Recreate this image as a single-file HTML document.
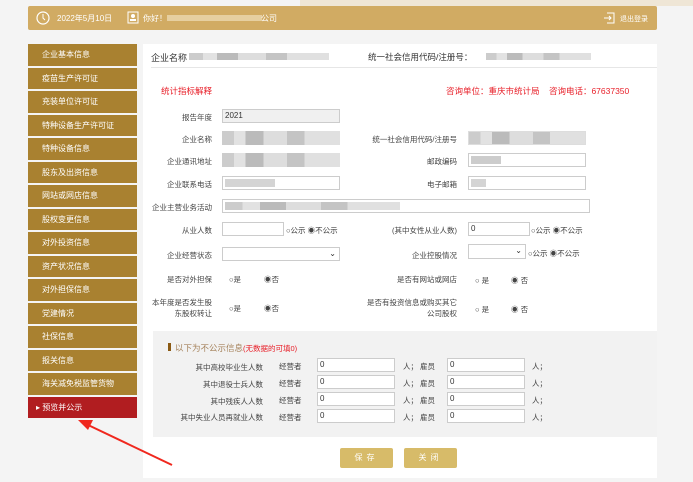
<!DOCTYPE html>
<html><head><meta charset="utf-8"><style>
*{margin:0;padding:0;box-sizing:border-box}
body{width:693px;height:482px;background:#f4f4f4;font-family:"Liberation Sans","Noto Sans CJK SC",sans-serif;font-size:8px;color:#333;position:relative;overflow:hidden}
.a{position:absolute;white-space:nowrap}
.hdr{left:28px;top:6px;width:629px;height:24px;background:#d1ab63;border-radius:2px;color:#fff;font-size:8px}
.side{left:28px;top:44px;width:109px}
.it{height:21.5px;margin-bottom:2px;background:#a98130;color:#fff;font-size:8px;line-height:21.5px;padding-left:14px}
.it.on{background:#b11d20;padding-left:8px}
.main{left:143px;top:44px;width:514px;height:434px;background:#fff}
.lbl{text-align:right;width:90px;font-size:7.5px;color:#444}
.in{height:14px;border:1px solid #ccc;background:#fff;font-size:8px;padding-left:2px;line-height:12px}
.bl{background:linear-gradient(90deg,#ccc 0 10%,#e2e2e2 10% 20%,#bbb 20% 35%,#ddd 35% 55%,#c4c4c4 55% 70%,#e0e0e0 70% 100%)}
.r{font-size:7.5px;color:#444}
.btn{width:53px;height:20px;background:#d7bb69;color:#fff;text-align:center;line-height:20px;border-radius:2px;font-size:8px;letter-spacing:4px}
</style></head><body>
<div class="a" style="left:300px;top:0;width:393px;height:6px;background:#efe6d6"></div>
<div class="a hdr">
 <svg class="a" style="left:8px;top:5px" width="14" height="14"><circle cx="7" cy="7" r="6" fill="none" stroke="#fff" stroke-width="1.2"/><path d="M7 3v4l2 2" stroke="#fff" fill="none"/></svg>
 <span class="a" style="left:29px;top:7px">2022年5月10日</span>
 <svg class="a" style="left:99px;top:5px" width="12" height="13"><rect x="1" y="1" width="10" height="11" fill="none" stroke="#fff"/><circle cx="6" cy="5" r="2" fill="#fff"/><rect x="3" y="8" width="6" height="2" fill="#fff"/></svg>
 <span class="a" style="left:115px;top:7px">你好！</span>
 <div class="a" style="left:139px;top:9px;width:95px;height:6px;background:#e6cfa0"></div>
 <span class="a" style="left:233px;top:7px">公司</span>
 <svg class="a" style="left:575px;top:6px" width="12" height="12"><path d="M4 1h7v10H4M1 6h7M6 4l2 2-2 2" fill="none" stroke="#fff"/></svg>
 <span class="a" style="left:592px;top:8px;font-size:7px">退出登录</span>
</div>
<div class="a side">
<div class="it">企业基本信息</div><div class="it">疫苗生产许可证</div><div class="it">充装单位许可证</div><div class="it">特种设备生产许可证</div><div class="it">特种设备信息</div><div class="it">股东及出资信息</div><div class="it">网站或网店信息</div><div class="it">股权变更信息</div><div class="it">对外投资信息</div><div class="it">资产状况信息</div><div class="it">对外担保信息</div><div class="it">党建情况</div><div class="it">社保信息</div><div class="it">报关信息</div><div class="it">海关减免税监管货物</div><div class="it on">▸ 预览并公示</div>
</div>
<div class="a main">
 <span class="a" style="left:8px;top:7px;font-size:9px">企业名称</span>
 <div class="a bl" style="left:46px;top:9px;width:140px;height:7px"></div>
 <span class="a" style="left:225px;top:7px;font-size:8.5px">统一社会信用代码/注册号：</span>
 <div class="a bl" style="left:343px;top:9px;width:105px;height:7px"></div>
 <div class="a" style="left:8px;top:23px;width:506px;height:1px;background:#e6e6e6"></div>
 <span class="a" style="left:18px;top:41px;color:#e8202a;font-size:8.5px">统计指标解释</span>
 <span class="a" style="left:303px;top:41px;color:#e8202a;font-size:8.5px">咨询单位：重庆市统计局 &nbsp;&nbsp;&nbsp;咨询电话：67637350</span>
</div>
<div class="a lbl" style="left:122px;top:112px">报告年度</div><div class="a in" style="left:222px;top:109px;width:118px;background:#f0f0f0">2021</div>
<div class="a lbl" style="left:122px;top:134px">企业名称</div><div class="a in bl" style="left:222px;top:131px;width:118px;border:none"></div>
<div class="a lbl" style="left:367px;top:134px">统一社会信用代码/注册号</div><div class="a in bl" style="left:468px;top:131px;width:118px;border-color:#ddd"></div>
<div class="a lbl" style="left:122px;top:156px">企业通讯地址</div><div class="a in bl" style="left:222px;top:153px;width:118px;border:none"></div>
<div class="a lbl" style="left:367px;top:156px">邮政编码</div><div class="a in" style="left:468px;top:153px;width:118px"><div style="width:30px;height:8px;margin-top:2px;background:#ccc"></div></div>
<div class="a lbl" style="left:122px;top:179px">企业联系电话</div><div class="a in" style="left:222px;top:176px;width:118px"><div style="width:50px;height:8px;margin-top:2px;background:#d4d4d4"></div></div>
<div class="a lbl" style="left:367px;top:179px">电子邮箱</div><div class="a in" style="left:468px;top:176px;width:118px"><div style="width:15px;height:8px;margin-top:2px;background:#d4d4d4"></div></div>
<div class="a lbl" style="left:122px;top:202px">企业主营业务活动</div><div class="a in" style="left:222px;top:199px;width:368px"><div class="bl" style="width:175px;height:8px;margin-top:2px"></div></div>
<div class="a lbl" style="left:122px;top:225px">从业人数</div><div class="a in" style="left:222px;top:222px;width:62px"></div><span class="a r" style="left:286px;top:225px">○公示 ◉不公示</span>
<div class="a lbl" style="left:367px;top:225px">(其中女性从业人数)</div><div class="a in" style="left:468px;top:222px;width:62px">0</div><span class="a r" style="left:531px;top:225px">○公示 ◉不公示</span>
<div class="a lbl" style="left:122px;top:250px">企业经营状态</div><div class="a in" style="left:222px;top:247px;width:118px;text-align:right;padding-right:3px">⌄</div>
<div class="a lbl" style="left:367px;top:250px">企业控股情况</div><div class="a in" style="left:468px;top:244px;width:58px;height:15px;text-align:right;padding-right:3px">⌄</div><span class="a r" style="left:528px;top:248px">○公示 ◉不公示</span>
<div class="a lbl" style="left:122px;top:274px">是否对外担保</div><span class="a r" style="left:229px;top:274px">○是</span><span class="a r" style="left:264px;top:274px">◉否</span>
<div class="a lbl" style="left:367px;top:274px">是否有网站或网店</div><span class="a r" style="left:475px;top:275px">○ 是</span><span class="a r" style="left:511px;top:275px">◉ 否</span>
<div class="a lbl" style="left:122px;top:297px;line-height:11px;white-space:normal">本年度是否发生股<br>东股权转让</div><span class="a r" style="left:229px;top:303px">○是</span><span class="a r" style="left:264px;top:303px">◉否</span>
<div class="a lbl" style="left:337px;top:297px;width:120px;line-height:11px;white-space:normal">是否有投资信息或购买其它<br>公司股权</div><span class="a r" style="left:475px;top:304px">○ 是</span><span class="a r" style="left:511px;top:304px">◉ 否</span>
<div class="a" style="left:153px;top:331px;width:504px;height:106px;background:#f2f2f2"></div>
<div class="a" style="left:168px;top:343px;width:3px;height:8px;background:#8b5a14"></div>
<span class="a" style="left:175px;top:342px;font-size:8.5px;color:#a5825b">以下为不公示信息<span style="color:#e8202a;font-size:7.5px">(无数据的可填0)</span></span>
<div class="a lbl" style="left:143px;top:362px;width:120px">其中高校毕业生人数</div>
<div class="a lbl" style="left:143px;top:379px;width:120px">其中退役士兵人数</div>
<div class="a lbl" style="left:143px;top:396px;width:120px">其中残疾人人数</div>
<div class="a lbl" style="left:143px;top:412px;width:120px">其中失业人员再就业人数</div>
<div class="a" style="left:279px;top:358px;width:280px">
<div style="position:relative;height:17px"><span class="a r" style="left:0;top:3px">经营者</span><div class="a in" style="left:38px;top:0;width:78px">0</div><span class="a r" style="left:124px;top:3px">人；</span><span class="a r" style="left:141px;top:3px">雇员</span><div class="a in" style="left:168px;top:0;width:78px">0</div><span class="a r" style="left:253px;top:3px">人；</span></div>
<div style="position:relative;height:17px"><span class="a r" style="left:0;top:3px">经营者</span><div class="a in" style="left:38px;top:0;width:78px">0</div><span class="a r" style="left:124px;top:3px">人；</span><span class="a r" style="left:141px;top:3px">雇员</span><div class="a in" style="left:168px;top:0;width:78px">0</div><span class="a r" style="left:253px;top:3px">人；</span></div>
<div style="position:relative;height:17px"><span class="a r" style="left:0;top:3px">经营者</span><div class="a in" style="left:38px;top:0;width:78px">0</div><span class="a r" style="left:124px;top:3px">人；</span><span class="a r" style="left:141px;top:3px">雇员</span><div class="a in" style="left:168px;top:0;width:78px">0</div><span class="a r" style="left:253px;top:3px">人；</span></div>
<div style="position:relative;height:17px"><span class="a r" style="left:0;top:3px">经营者</span><div class="a in" style="left:38px;top:0;width:78px">0</div><span class="a r" style="left:124px;top:3px">人；</span><span class="a r" style="left:141px;top:3px">雇员</span><div class="a in" style="left:168px;top:0;width:78px">0</div><span class="a r" style="left:253px;top:3px">人；</span></div>
</div>
<div class="a btn" style="left:340px;top:448px">保存</div>
<div class="a btn" style="left:404px;top:448px">关闭</div>
<svg class="a" style="left:0;top:0" width="693" height="482"><line x1="172" y1="465" x2="86" y2="424" stroke="#f0281e" stroke-width="2"/><path d="M78 420L93 420L88 430Z" fill="#f0281e"/></svg>
</body></html>
